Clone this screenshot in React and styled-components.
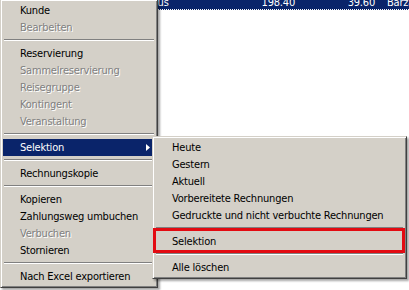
import styled, { createGlobalStyle } from 'styled-components';

const GlobalStyle = createGlobalStyle`
  html, body {
    margin: 0;
    padding: 0;
    background: #fff;
  }

  body {
    font-family: "DejaVu Sans Condensed", "Liberation Sans", sans-serif;
    font-size: 11px;
    letter-spacing: -0.2px;
  }
`;

const Screen = styled.div`
  position: relative;
  width: 409px;
  height: 290px;
  overflow: hidden;
  background: #fff;
`;

const List = styled.div`
  display: flex;
  flex-direction: column;
  margin-top: -4px;
`;

const Row = styled.div`
  display: flex;
  align-items: flex-end;
  height: 13px;
  line-height: 13px;
  background: ${(p) => (p.$selected ? '#0a246a' : 'transparent')};
  color: ${(p) => (p.$selected ? '#fff' : '#000')};
  border-bottom: 1px dotted ${(p) => (p.$selected ? '#fff' : 'transparent')};
  white-space: nowrap;
`;

const NameCell = styled.div`
  width: 200px;
  padding-left: 126px;
  box-sizing: border-box;
  overflow: hidden;
`;

const AmountCell = styled.div`
  width: ${(p) => p.$width}px;
  padding-right: 2px;
  box-sizing: border-box;
  text-align: right;
`;

const TextCell = styled.div`
  flex: 1;
  padding-left: 10px;
  overflow: hidden;
`;

const Menu = styled.div`
  position: absolute;
  top: ${(p) => p.$top}px;
  left: ${(p) => p.$left}px;
  width: ${(p) => p.$width}px;
  box-sizing: border-box;
  padding: 2px;
  border: 1px solid;
  border-color: #d4d0c8 #404040 #404040 #d4d0c8;
  background: #d4d0c8;
  box-shadow: inset 1px 1px 0 #fff, inset -1px -1px 0 #808080,
    2px 2px 2px rgba(0, 0, 0, 0.35);
  color: #000;
`;

const Item = styled.div`
  position: relative;
  display: flex;
  align-items: center;
  height: 17px;
  padding-left: 17px;
  white-space: nowrap;
  background: ${(p) => (p.$active ? '#0a246a' : 'transparent')};
  color: ${(p) => (p.$disabled ? '#808080' : p.$active ? '#fff' : '#000')};
  text-shadow: ${(p) => (p.$disabled ? '1px 1px 0 #fff' : 'none')};
`;

const Separator = styled.div`
  padding: 3px 1px 4px;

  &::after {
    content: '';
    display: block;
    border-top: 1px solid #808080;
    border-bottom: 1px solid #fff;
  }
`;

const Arrow = styled.svg`
  margin-left: auto;
  margin-right: 5px;
  fill: currentColor;
`;

const Highlight = styled.div`
  position: absolute;
  top: -5px;
  bottom: -3px;
  left: -2px;
  right: -1px;
  border: 3px solid #e30b12;
  pointer-events: none;
`;

const SubmenuArrow = () => (
  <Arrow width="4" height="7" viewBox="0 0 4 7">
    <polygon points="0,0 4,3.5 0,7" />
  </Arrow>
);

const Selection = () => (
  <Menu $top={-3} $left={149} $width={255}>
    <Item>Heute</Item>
    <Item>Gestern</Item>
    <Item>Aktuell</Item>
    <Item>Vorbereitete Rechnungen</Item>
    <Item>Gedruckte und nicht verbuchte Rechnungen</Item>
    <Separator />
    <Item>
      Selektion
      <Highlight />
    </Item>
    <Separator />
    <Item>Alle löschen</Item>
  </Menu>
);

export default function App() {
  return (
    <>
      <GlobalStyle />
      <Screen>
        <List>
          <Row $selected>
            <NameCell>Reisebus</NameCell>
            <AmountCell $width={97}>198.40</AmountCell>
            <AmountCell $width={80}>39.60</AmountCell>
            <TextCell>Barzahlung</TextCell>
          </Row>
        </List>

        <Menu $top={-1} $left={0} $width={158}>
          <Item>Kunde</Item>
          <Item $disabled>Bearbeiten</Item>
          <Separator />
          <Item>Reservierung</Item>
          <Item $disabled>Sammelreservierung</Item>
          <Item $disabled>Reisegruppe</Item>
          <Item $disabled>Kontingent</Item>
          <Item $disabled>Veranstaltung</Item>
          <Separator />
          <Item $active>
            Selektion
            <SubmenuArrow />
            <Selection />
          </Item>
          <Separator />
          <Item>Rechnungskopie</Item>
          <Separator />
          <Item>Kopieren</Item>
          <Item>Zahlungsweg umbuchen</Item>
          <Item $disabled>Verbuchen</Item>
          <Item>Stornieren</Item>
          <Separator />
          <Item>Nach Excel exportieren</Item>
        </Menu>
      </Screen>
    </>
  );
}
